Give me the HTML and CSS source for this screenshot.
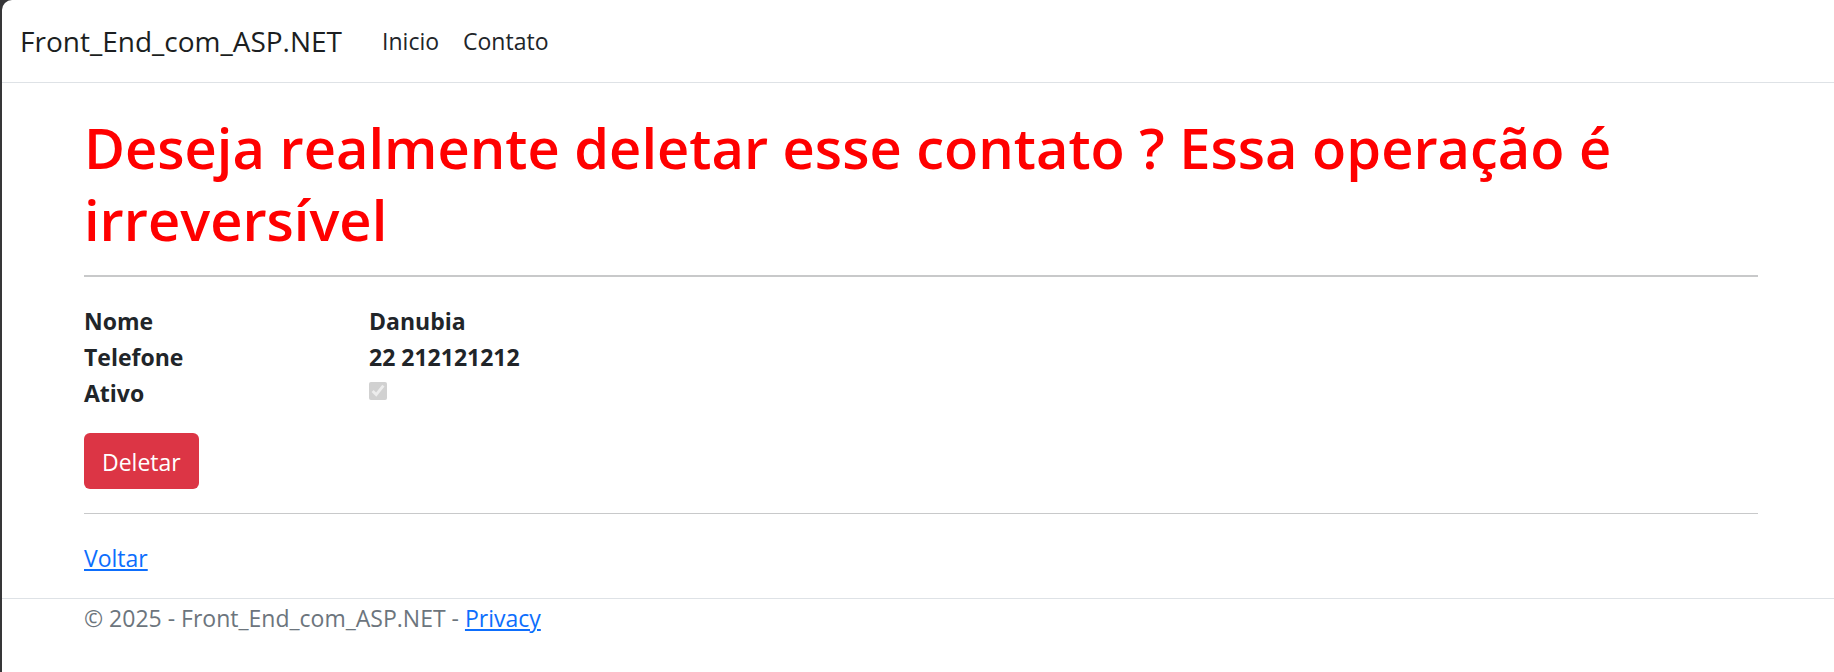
FILE: index.html
```html
<!DOCTYPE html>
<html lang="pt-BR">
<head>
  <meta charset="utf-8">
  <meta name="viewport" content="width=device-width, initial-scale=1">
  <title>Deletar contato - Front_End_com_ASP.NET</title>
  <link rel="stylesheet" href="styles.css">
</head>
<body>
  <div class="page">
    <header class="site-header">
      <nav class="navbar">
        <a class="navbar-brand" href="#">Front_End_com_ASP.NET</a>
        <ul class="navbar-nav">
          <li><a class="nav-link" href="#">Inicio</a></li>
          <li><a class="nav-link" href="#">Contato</a></li>
        </ul>
      </nav>
    </header>

    <main class="container main">
      <h1 class="warning-title">Deseja realmente deletar esse contato ? Essa operação é irreversível</h1>
      <hr class="divider divider-strong">
      <dl class="details">
        <dt>Nome</dt>
        <dd>Danubia</dd>
        <dt>Telefone</dt>
        <dd>22 212121212</dd>
        <dt><label for="ativo">Ativo</label></dt>
        <dd class="check-cell"><input class="check" type="checkbox" id="ativo" checked disabled></dd>
      </dl>
      <form class="delete-form">
        <button class="btn-danger" type="button">Deletar</button>
      </form>
      <hr class="divider">
      <div class="back"><a class="link" href="#">Voltar</a></div>
    </main>

    <footer class="site-footer">
      <div class="container">© 2025 - Front_End_com_ASP.NET - <a class="link" href="#">Privacy</a></div>
    </footer>
  </div>
</body>
</html>
```
FILE: styles.css
```css
* {
  box-sizing: border-box;
}

body {
  margin: 0;
  background: #363638;
  color: #212529;
  font-family: "Segoe UI", "Open Sans", "Noto Sans", sans-serif;
  font-size: 23px;
  line-height: 36px;
}

.page {
  min-height: 100vh;
  margin-left: 2px;
  background: #fff;
  border-top-left-radius: 10px;
}

.site-header {
  border-bottom: 1px solid #dee2e6;
}

.navbar {
  display: flex;
  align-items: center;
  gap: 40px;
  padding: 18px;
}

.navbar-brand {
  color: #1b1e21;
  font-size: 28px;
  line-height: 46px;
  text-decoration: none;
}

.navbar-nav {
  display: flex;
  gap: 24px;
  margin: 0;
  padding: 0;
  list-style: none;
}

.nav-link {
  color: #212529;
  text-decoration: none;
}

.container {
  padding: 0 76px 0 82px;
}

.main {
  padding-top: 28px;
  padding-bottom: 22px;
}

.warning-title {
  margin: 0;
  color: #f00;
  font-size: 56px;
  font-weight: 600;
  line-height: 72px;
}

.divider {
  height: 1px;
  margin: 24px 0 26px;
  border: 0;
  background: #c8c9ca;
}

.divider-strong {
  height: 2px;
  margin-top: 20px;
}

.details {
  display: grid;
  grid-template-columns: 285px 1fr;
  margin: 0;
  font-weight: 700;
}

.details dd {
  margin: 0;
}

.check-cell {
  display: flex;
  align-items: flex-start;
  padding-top: 7px;
}

.check {
  width: 18px;
  height: 18px;
  margin: 0;
}

.delete-form {
  margin-top: 22px;
}

.btn-danger {
  display: block;
  padding: 11px 18px 9px;
  border: 0;
  border-radius: 6px;
  background: #dc3545;
  color: #fff;
  font: inherit;
}

.link {
  color: #0d6efd;
}

.site-footer {
  padding-top: 1px;
  border-top: 1px solid #dee2e6;
  color: #6c757d;
}
```
